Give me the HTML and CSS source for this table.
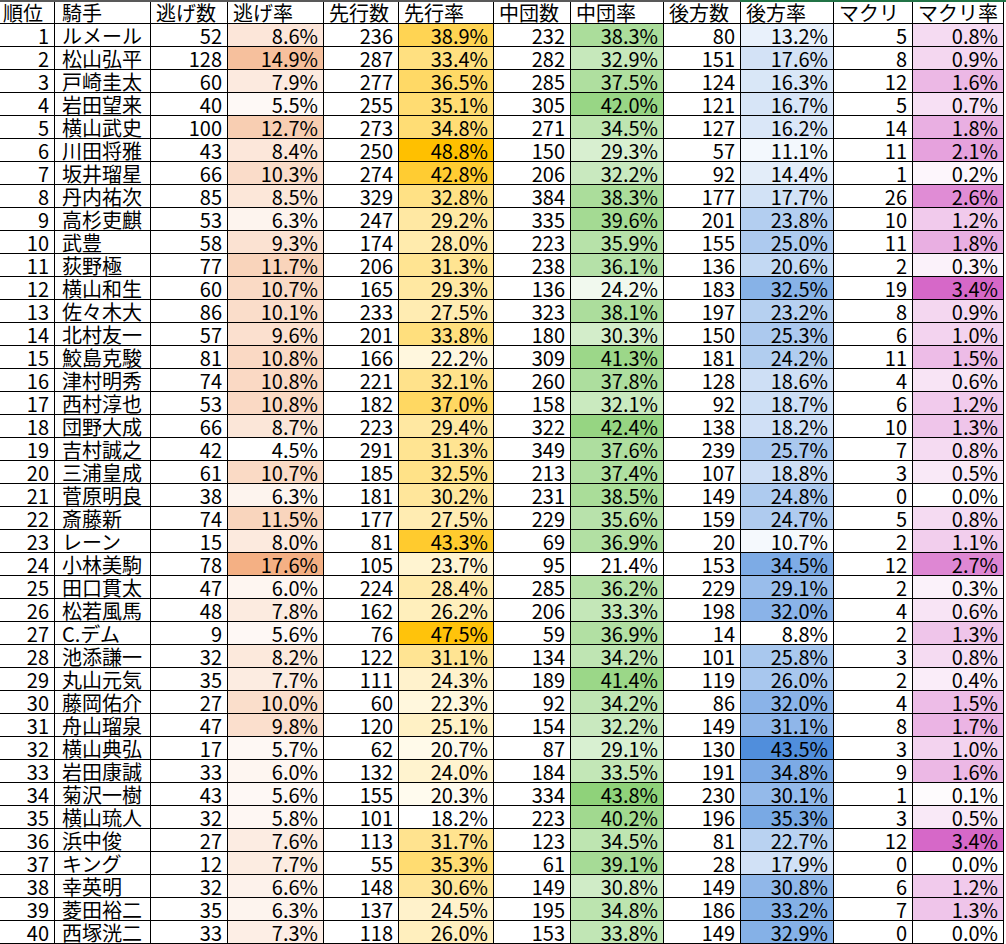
FILE: index.html
```html
<!DOCTYPE html>
<html lang="ja">
<head>
<meta charset="utf-8">
<title>騎手 脚質</title>
<link rel="stylesheet" href="styles.css">
</head>
<body>
<div class="sheet" id="sheet">
  <div class="h first">順位</div><div class="h name">騎手</div><div class="h">逃げ数</div><div class="h">逃げ率</div><div class="h">先行数</div><div class="h">先行率</div><div class="h">中団数</div><div class="h">中団率</div><div class="h">後方数</div><div class="h">後方率</div><div class="h">マクリ</div><div class="h">マクリ率</div>
</div>
<script src="script.js"></script>
</body>
</html>
```

FILE: styles.css
```css
html, body {
  margin: 0;
  padding: 0;
  background: #fff;
}
body {
  font-family: "Noto Sans CJK JP", "Noto Sans", sans-serif;
  font-size: 20px;
  color: #000;
}
.sheet {
  width: 1006px;
  display: grid;
  grid-template-columns: 55px 96px 77px 96px 75px 95px 77px 93px 77px 93px 79px 91px;
  grid-template-rows: 22px;
  grid-auto-rows: 23px;
  border-top: 2px solid #595959;
  border-image: linear-gradient(to right, #595959 740px, #217346 740px) 1;
}
.sheet > div {
  box-sizing: border-box;
  border-right: 1px solid #000;
  border-bottom: 1px solid #000;
  line-height: 22px;
  padding-top: 1px;
  white-space: nowrap;
  overflow: visible;
}
.h {
  padding-left: 5px;
  line-height: 20px !important;
}
.h.first {
  padding-left: 3px;
}
.h.name, .n {
  padding-left: 7px;
}
.r {
  text-align: right;
  padding-right: 5px;
}
```

FILE: script.js
```js
var data = [
[1,"ルメール",52,8.6,236,38.9,232,38.3,80,13.2,5,0.8],
[2,"松山弘平",128,14.9,287,33.4,282,32.9,151,17.6,8,0.9],
[3,"戸崎圭太",60,7.9,277,36.5,285,37.5,124,16.3,12,1.6],
[4,"岩田望来",40,5.5,255,35.1,305,42.0,121,16.7,5,0.7],
[5,"横山武史",100,12.7,273,34.8,271,34.5,127,16.2,14,1.8],
[6,"川田将雅",43,8.4,250,48.8,150,29.3,57,11.1,11,2.1],
[7,"坂井瑠星",66,10.3,274,42.8,206,32.2,92,14.4,1,0.2],
[8,"丹内祐次",85,8.5,329,32.8,384,38.3,177,17.7,26,2.6],
[9,"高杉吏麒",53,6.3,247,29.2,335,39.6,201,23.8,10,1.2],
[10,"武豊",58,9.3,174,28.0,223,35.9,155,25.0,11,1.8],
[11,"荻野極",77,11.7,206,31.3,238,36.1,136,20.6,2,0.3],
[12,"横山和生",60,10.7,165,29.3,136,24.2,183,32.5,19,3.4],
[13,"佐々木大",86,10.1,233,27.5,323,38.1,197,23.2,8,0.9],
[14,"北村友一",57,9.6,201,33.8,180,30.3,150,25.3,6,1.0],
[15,"鮫島克駿",81,10.8,166,22.2,309,41.3,181,24.2,11,1.5],
[16,"津村明秀",74,10.8,221,32.1,260,37.8,128,18.6,4,0.6],
[17,"西村淳也",53,10.8,182,37.0,158,32.1,92,18.7,6,1.2],
[18,"団野大成",66,8.7,223,29.4,322,42.4,138,18.2,10,1.3],
[19,"吉村誠之",42,4.5,291,31.3,349,37.6,239,25.7,7,0.8],
[20,"三浦皇成",61,10.7,185,32.5,213,37.4,107,18.8,3,0.5],
[21,"菅原明良",38,6.3,181,30.2,231,38.5,149,24.8,0,0.0],
[22,"斎藤新",74,11.5,177,27.5,229,35.6,159,24.7,5,0.8],
[23,"レーン",15,8.0,81,43.3,69,36.9,20,10.7,2,1.1],
[24,"小林美駒",78,17.6,105,23.7,95,21.4,153,34.5,12,2.7],
[25,"田口貫太",47,6.0,224,28.4,285,36.2,229,29.1,2,0.3],
[26,"松若風馬",48,7.8,162,26.2,206,33.3,198,32.0,4,0.6],
[27,"C.デム",9,5.6,76,47.5,59,36.9,14,8.8,2,1.3],
[28,"池添謙一",32,8.2,122,31.1,134,34.2,101,25.8,3,0.8],
[29,"丸山元気",35,7.7,111,24.3,189,41.4,119,26.0,2,0.4],
[30,"藤岡佑介",27,10.0,60,22.3,92,34.2,86,32.0,4,1.5],
[31,"舟山瑠泉",47,9.8,120,25.1,154,32.2,149,31.1,8,1.7],
[32,"横山典弘",17,5.7,62,20.7,87,29.1,130,43.5,3,1.0],
[33,"岩田康誠",33,6.0,132,24.0,184,33.5,191,34.8,9,1.6],
[34,"菊沢一樹",43,5.6,155,20.3,334,43.8,230,30.1,1,0.1],
[35,"横山琉人",32,5.8,101,18.2,223,40.2,196,35.3,3,0.5],
[36,"浜中俊",27,7.6,113,31.7,123,34.5,81,22.7,12,3.4],
[37,"キング",12,7.7,55,35.3,61,39.1,28,17.9,0,0.0],
[38,"幸英明",32,6.6,148,30.6,149,30.8,149,30.8,6,1.2],
[39,"菱田裕二",35,6.3,137,24.5,195,34.8,186,33.2,7,1.3],
[40,"西塚洸二",33,7.3,118,26.0,153,33.8,149,32.9,0,0.0]
];
var scales = {
  3: [244,176,132],
  5: [255,192,0],
  7: [143,210,122],
  9: [80,142,220],
  11: [214,104,200]
};
var ranges = {};
Object.keys(scales).forEach(function (k) {
  var vals = data.map(function (r) { return r[k]; });
  ranges[k] = [Math.min.apply(null, vals), Math.max.apply(null, vals)];
});
var sheet = document.getElementById("sheet");
data.forEach(function (row) {
  row.forEach(function (v, i) {
    var d = document.createElement("div");
    if (i === 1) {
      d.className = "n";
      d.textContent = v;
    } else {
      d.className = "r";
      d.textContent = scales[i] ? v.toFixed(1) + "%" : String(v);
    }
    if (scales[i]) {
      var t = (v - ranges[i][0]) / (ranges[i][1] - ranges[i][0]);
      var c = scales[i].map(function (m) { return Math.round(255 + (m - 255) * t); });
      d.style.backgroundColor = "rgb(" + c.join(",") + ")";
    }
    sheet.appendChild(d);
  });
});
```
